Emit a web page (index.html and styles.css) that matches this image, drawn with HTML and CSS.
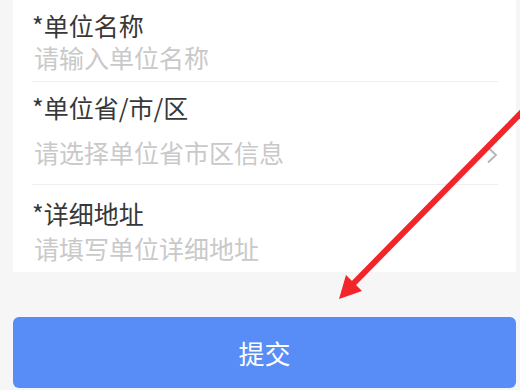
FILE: index.html
```html
<!DOCTYPE html>
<html lang="zh-CN">
<head>
<meta charset="utf-8">
<title>单位信息</title>
<link rel="stylesheet" href="styles.css">
</head>
<body>
<div class="page">
  <div class="card">
    <div class="row row-name">
      <div class="label">*单位名称</div>
      <div class="value">请输入单位名称</div>
    </div>
    <div class="row row-region">
      <div class="label">*单位省/市/区</div>
      <div class="value select">
        <span>请选择单位省市区信息</span>
        <svg class="chevron" width="12" height="18" viewBox="0 0 12 18"><path d="M2 1.5 L10 9 L2 16.5" fill="none" stroke="#b4b4b4" stroke-width="1.8"/></svg>
      </div>
    </div>
    <div class="row row-address">
      <div class="label">*详细地址</div>
      <div class="value">请填写单位详细地址</div>
    </div>
  </div>
  <button class="submit">提交</button>
</div>
<svg class="annotation" width="520" height="390" viewBox="0 0 520 390">
  <line x1="524" y1="110" x2="352" y2="285" stroke="#f2262a" stroke-width="6" stroke-linecap="butt"/>
  <polygon points="339,299 346,275 354,283 362,291" fill="#f2262a"/>
</svg>
</body>
</html>
```
FILE: styles.css
```css
html, body {
  margin: 0;
  padding: 0;
}
body {
  width: 520px;
  height: 390px;
  overflow: hidden;
  background: #f6f6f6;
  font-family: "Noto Sans CJK SC", "Noto Sans", sans-serif;
  position: relative;
}
.page {
  display: flex;
  flex-direction: column;
  padding: 0 4px 0 13px;
}
.card {
  background: #ffffff;
  display: flex;
  flex-direction: column;
  height: 272px;
  box-sizing: border-box;
}
.row {
  margin: 0 18px 0 19px;
  display: flex;
  flex-direction: column;
}
.label {
  font-size: 25px;
  line-height: 32px;
  color: #383838;
}
.value {
  font-size: 25px;
  line-height: 32px;
  color: #c9c9c9;
  padding-left: 2px;
}
.select {
  display: flex;
  align-items: center;
  justify-content: space-between;
}
.chevron {
  margin-top: 6px;
}
.row-name {
  padding: 9px 0 8px;
  border-bottom: 1px solid #efefef;
}
.row-region {
  padding: 9px 0 16px;
  border-bottom: 1px solid #efefef;
}
.row-region .value {
  margin-top: 13px;
}
.row-address {
  padding: 12px 0 0;
}
.row-address .value {
  margin-top: 3px;
}
.submit {
  margin-top: 45px;
  height: 71px;
  border: none;
  border-radius: 6px;
  background: #588cf6;
  color: #ffffff;
  font-family: "Noto Sans CJK SC", "Noto Sans", sans-serif;
  font-size: 26px;
  padding: 0;
}
.annotation {
  position: absolute;
  left: 0;
  top: 0;
  pointer-events: none;
}
```
